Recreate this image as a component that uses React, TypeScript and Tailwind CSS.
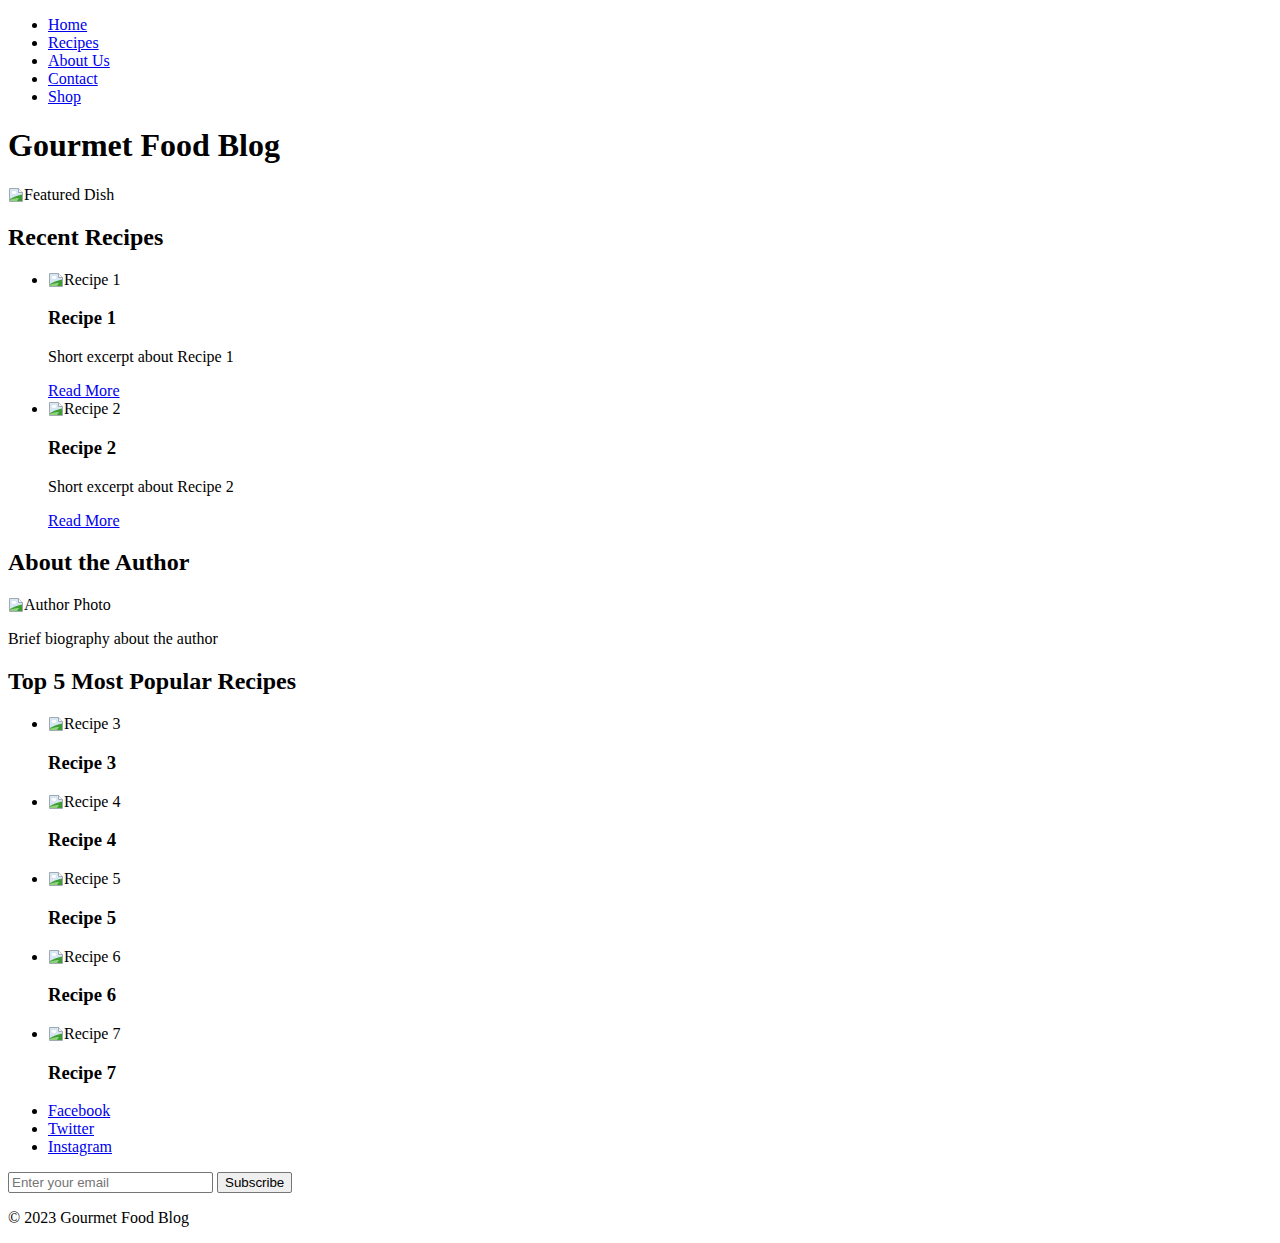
import React from "react";

const Broken = ({ alt }: { alt: string }) => (
  <span className="inline">
    <svg width="16" height="16" viewBox="0 0 16 16" className="inline-block align-[-3px]">
      <path d="M1.5 1.5 H10.5 L14.5 5.5 V14.5 H1.5 Z" fill="#d6e6f4" stroke="#a0a8b0" />
      <path d="M10.5 1.5 V5.5 H14.5" fill="#f4f6f8" stroke="#a0a8b0" />
      <ellipse cx="6" cy="5.5" rx="2.5" ry="1.4" fill="#ffffff" />
      <path d="M2 14 L2 12 C6 10 10 8 14 7.5 L14 14 Z" fill="#3f9e33" />
      <path d="M2 14 L2 12.8 C5 11.5 8 11 11 11 L9 14 Z" fill="#8fd17a" />
    </svg>
    {alt}
  </span>
);

const A = ({ children }: { children: React.ReactNode }) => (
  <a href="#" className="text-[#0000ee] underline">
    {children}
  </a>
);

const H3 = ({ children }: { children: React.ReactNode }) => (
  <h3 className="text-[18.72px] font-bold my-[18.72px]">{children}</h3>
);

export default function App() {
  return (
    <div className="m-2 text-black bg-white leading-[normal] text-[16px] font-['Liberation_Serif','Times_New_Roman',serif]">
      <header>
        <nav>
          <ul className="list-disc pl-10 my-4">
            <li><A>Home</A></li>
            <li><A>Recipes</A></li>
            <li><A>About Us</A></li>
            <li><A>Contact</A></li>
            <li><A>Shop</A></li>
          </ul>
        </nav>
        <h1 className="text-[32px] font-bold my-[21.44px]">Gourmet Food Blog</h1>
      </header>
      <div>
        <Broken alt="Featured Dish" />
      </div>
      <section>
        <h2 className="text-[24px] font-bold my-[19.92px]">Recent Recipes</h2>
        <ul className="list-disc pl-10 my-4">
          {[1, 2].map((n) => (
            <li key={n}>
              <Broken alt={`Recipe ${n}`} />
              <H3>Recipe {n}</H3>
              <p className="my-4">Short excerpt about Recipe {n}</p>
              <A>Read More</A>
            </li>
          ))}
        </ul>
      </section>
      <section>
        <h2 className="text-[24px] font-bold my-[19.92px]">About the Author</h2>
        <Broken alt="Author Photo" />
        <p className="my-4">Brief biography about the author</p>
      </section>
      <section>
        <h2 className="text-[24px] font-bold my-[19.92px]">Top 5 Most Popular Recipes</h2>
        <ul className="list-disc pl-10 my-4">
          {[3, 4, 5, 6, 7].map((n) => (
            <li key={n}>
              <Broken alt={`Recipe ${n}`} />
              <H3>Recipe {n}</H3>
            </li>
          ))}
        </ul>
      </section>
      <footer>
        <ul className="list-disc pl-10 my-4">
          <li><A>Facebook</A></li>
          <li><A>Twitter</A></li>
          <li><A>Instagram</A></li>
        </ul>
        <form onSubmit={(e) => e.preventDefault()}>
          <input
            type="email"
            placeholder="Enter your email"
            className="w-[205px] h-[21px] px-[3px] py-[1px] border border-[#767676] rounded-[2px] text-[13.33px] font-['Liberation_Sans',Arial,sans-serif] placeholder:text-[#757575] align-middle"
          />{" "}
          <button
            type="submit"
            className="h-[21px] px-[7px] bg-[#efefef] border border-[#767676] rounded-[2px] text-[13.33px] font-['Liberation_Sans',Arial,sans-serif] align-middle"
          >
            Subscribe
          </button>
        </form>
        <p className="my-4">© 2023 Gourmet Food Blog</p>
      </footer>
    </div>
  );
}
